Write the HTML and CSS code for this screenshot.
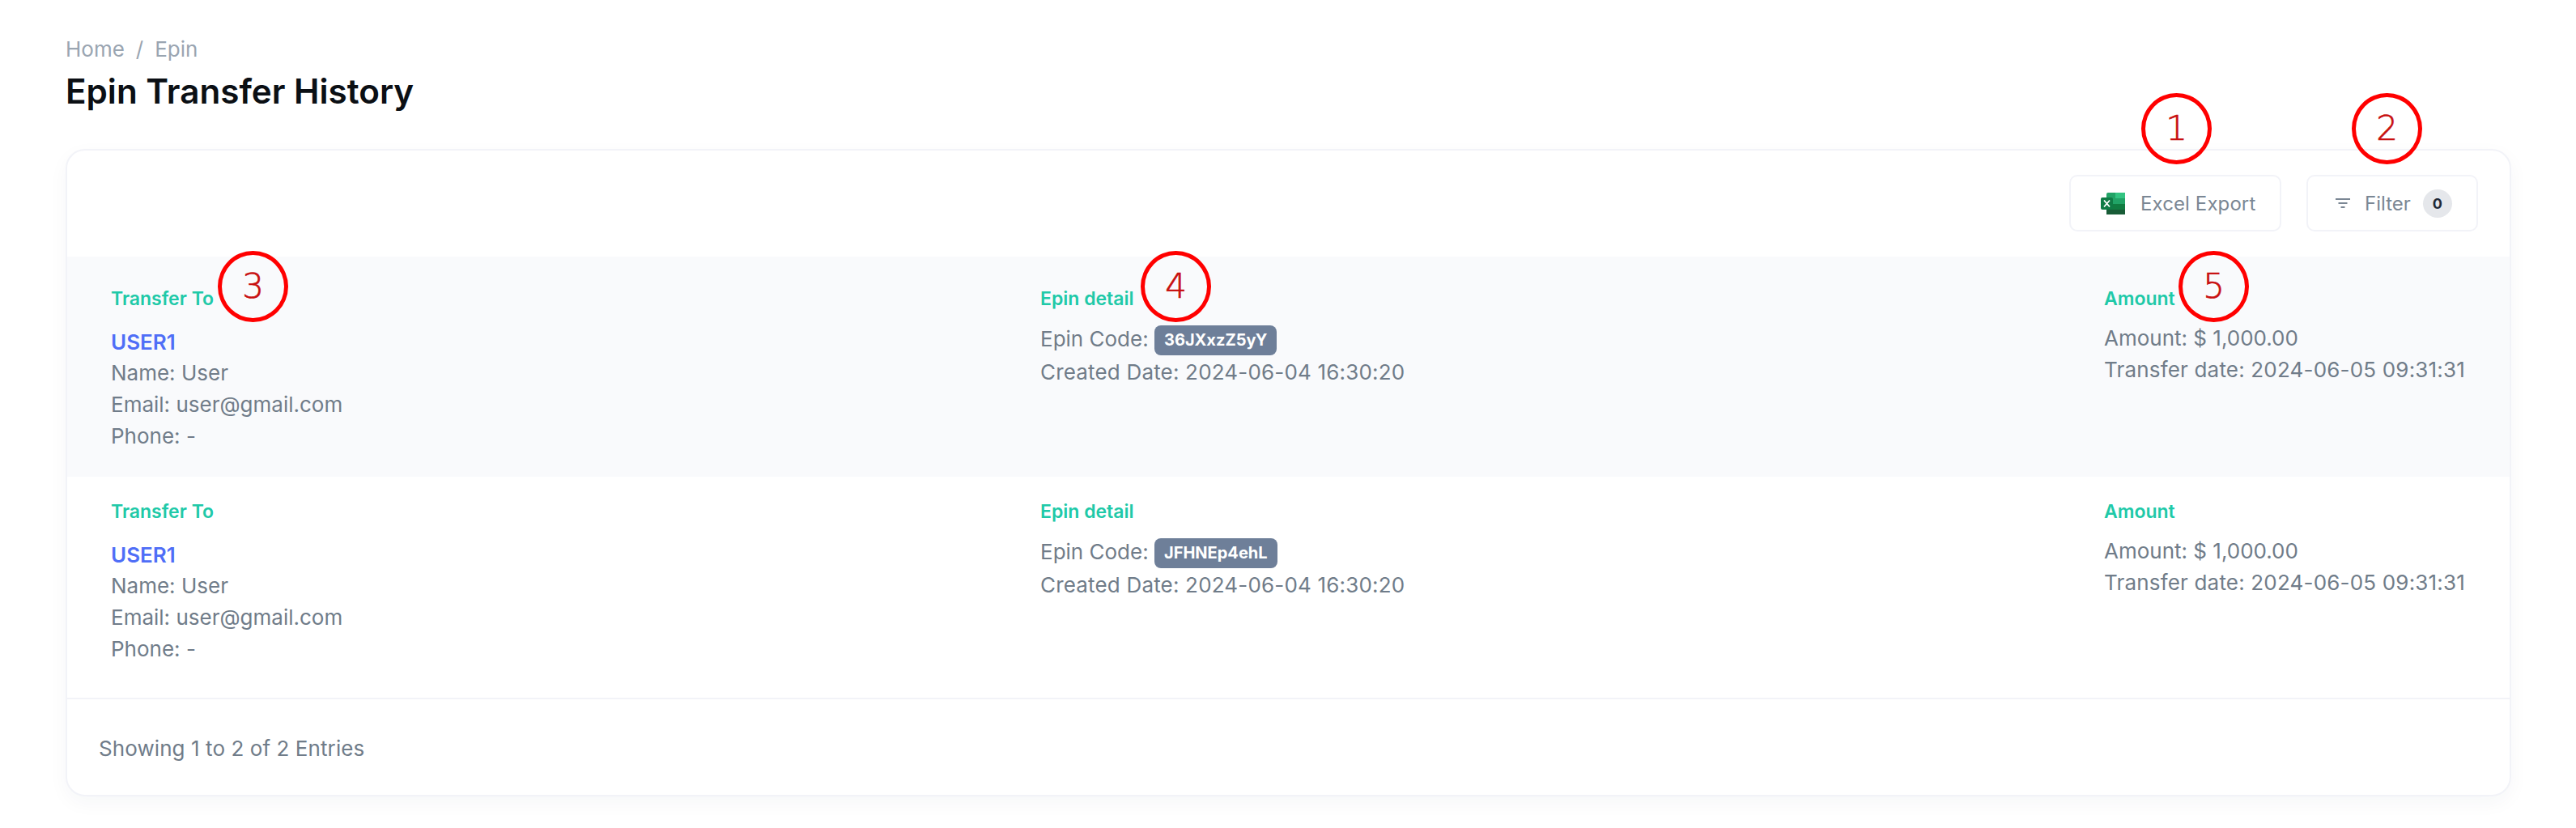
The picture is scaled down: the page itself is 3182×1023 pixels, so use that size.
FILE: index.html
```html
<!DOCTYPE html>
<html lang="en">
  <head>
    <meta charset="UTF-8">
    <title>Epin Transfer History</title>
    <link rel="stylesheet" href="styles.css">
  </head>
  <body>
    <div class="breadcrumb">Home<span class="crumb-sep">/</span>Epin</div>
    <h1>Epin Transfer History</h1>

    <div class="card">
      <div class="toolbar">
        <button class="tool-btn excel-btn">
          <svg class="excel-icon" viewBox="0 0 30 27">
            <rect x="7" y="0" width="23" height="27" rx="2" fill="#21a366"/>
            <rect x="18" y="0" width="12" height="7" fill="#33c481"/>
            <rect x="7" y="7" width="11" height="7" fill="#21a366"/>
            <rect x="18" y="7" width="12" height="7" fill="#21a366"/>
            <rect x="7" y="14" width="11" height="7" fill="#107c41"/>
            <rect x="18" y="14" width="12" height="7" fill="#107c41"/>
            <rect x="7" y="21" width="23" height="6" fill="#185c37"/>
            <rect x="0" y="6" width="15" height="15" rx="2" fill="#0f7b45"/>
            <path d="M4 9.5 L11 17.5 M11 9.5 L4 17.5" stroke="#fff" stroke-width="1.8" fill="none"/>
          </svg>
          Excel Export
        </button>
        <button class="tool-btn filter-btn">
          <svg class="filter-icon" viewBox="0 0 18 12">
            <path d="M0 1 H18 M3.5 6 H14.5 M6.5 11 H11.5" stroke="#7b8794" stroke-width="2" fill="none"/>
          </svg>
          Filter
          <span class="count">0</span>
        </button>
      </div>

      <div class="row shaded">
        <div>
          <div class="col-label user-label">Transfer To</div>
          <a class="user-link">USER1</a>
          <p>Name: User</p>
          <p>Email: user@gmail.com</p>
          <p>Phone: -</p>
        </div>
        <div>
          <div class="col-label">Epin detail</div>
          <p class="code-line">Epin Code: <span class="code">36JXxzZ5yY</span></p>
          <p class="date">Created Date: 2024-06-04 16:30:20</p>
        </div>
        <div>
          <div class="col-label">Amount</div>
          <p>Amount: $ 1,000.00</p>
          <p class="date">Transfer date: 2024-06-05 09:31:31</p>
        </div>
      </div>

      <div class="row">
        <div>
          <div class="col-label user-label">Transfer To</div>
          <a class="user-link">USER1</a>
          <p>Name: User</p>
          <p>Email: user@gmail.com</p>
          <p>Phone: -</p>
        </div>
        <div>
          <div class="col-label">Epin detail</div>
          <p class="code-line">Epin Code: <span class="code">JFHNEp4ehL</span></p>
          <p class="date">Created Date: 2024-06-04 16:30:20</p>
        </div>
        <div>
          <div class="col-label">Amount</div>
          <p>Amount: $ 1,000.00</p>
          <p class="date">Transfer date: 2024-06-05 09:31:31</p>
        </div>
      </div>

      <div class="card-footer">Showing 1 to 2 of 2 Entries</div>
    </div>

    <!-- numbered callouts drawn over the page -->
    <div class="callout c1">1</div>
    <div class="callout c2">2</div>
    <div class="callout c3">3</div>
    <div class="callout c4">4</div>
    <div class="callout c5">5</div>
  </body>
</html>
```

FILE: styles.css
```css
body {
    font-family: Inter, "Noto Sans", sans-serif;
    margin: 0;
    padding: 41px 80px 0 81px;
    background-color: #fff;
    color: #707c89;
    font-size: 26px;
    line-height: 39px;
    position: relative;
    height: 982px;
    overflow: hidden;
}
.breadcrumb {
    color: #9aa5b1;
    height: 39px;
}
.crumb-sep {
    margin: 0 14px;
}
h1 {
    color: #0b0f14;
    font-size: 42.2px;
    font-weight: 600;
    line-height: 50px;
    margin: 8px 0 46px;
}
.card {
    background: white;
    border: 2px solid #f2f3f8;
    border-radius: 24px;
    box-shadow: 0 8px 24px rgba(30, 40, 70, 0.04);
    height: 800px;
    box-sizing: border-box;
}
.toolbar {
    display: flex;
    justify-content: flex-end;
    gap: 31px;
    padding: 30px 39px 29px 0;
    height: 131px;
    box-sizing: border-box;
}
.tool-btn {
    display: flex;
    align-items: center;
    font-family: inherit;
    font-size: 24px;
    color: #7b8794;
    background: white;
    border: 2px solid #f2f3f8;
    border-radius: 10px;
    height: 70px;
    box-sizing: border-box;
    padding: 0;
}
.excel-btn {
    width: 262px;
    padding-left: 37px;
    gap: 19px;
    letter-spacing: 0.1px;
}
.excel-icon {
    width: 30px;
    height: 27px;
}
.filter-btn {
    width: 212px;
    padding-left: 34px;
}
.filter-icon {
    width: 18px;
    height: 12px;
    margin-right: 18px;
}
.count {
    display: flex;
    align-items: center;
    justify-content: center;
    width: 36px;
    height: 35px;
    margin-left: 15px;
    border-radius: 50%;
    background: #e5e7eb;
    color: #1f2937;
    font-size: 18px;
    font-weight: 700;
}
.row {
    display: grid;
    grid-template-columns: 1148px 1314px 1fr;
    padding: 26px 0 0 54px;
    height: 273px;
    box-sizing: border-box;
}
.shaded {
    background-color: #f9fafc;
    height: 272px;
    padding-top: 35px;
}
.col-label {
    color: #20c9a8;
    font-size: 23px;
    font-weight: 600;
    line-height: 34px;
    margin-bottom: 12px;
}
.user-label {
    margin-bottom: 18px;
}
.user-link {
    display: block;
    color: #4f6ef7;
    font-weight: 600;
    line-height: 37px;
}
p {
    margin: 0;
}
.date {
    letter-spacing: 0.18px;
}
.code-line {
    height: 42px;
    line-height: 41px;
}
.code {
    display: inline-block;
    background: #6e7f99;
    color: white;
    font-size: 20px;
    font-weight: 700;
    line-height: 37px;
    padding: 0 12px;
    border-radius: 8px;
    vertical-align: 1px;
}
.card-footer {
    border-top: 2px solid #f2f3f8;
    padding: 41px 0 0 39px;
    letter-spacing: 0.08px;
}
.callout {
    position: absolute;
    width: 77px;
    height: 78px;
    border: 5px solid #f00;
    border-radius: 50%;
    display: flex;
    align-items: center;
    justify-content: center;
    color: #c80f0f;
    font-family: "DejaVu Sans", sans-serif;
    font-weight: 200;
    font-size: 42px;
    line-height: 1;
    -webkit-text-stroke: 0.7px #c80f0f;
}
.c1 { left: 2645px; top: 115px; }
.c2 { left: 2905px; top: 115px; }
.c3 { left: 269px; top: 310px; }
.c4 { left: 1409px; top: 310px; }
.c5 { left: 2691px; top: 310px; }
```
